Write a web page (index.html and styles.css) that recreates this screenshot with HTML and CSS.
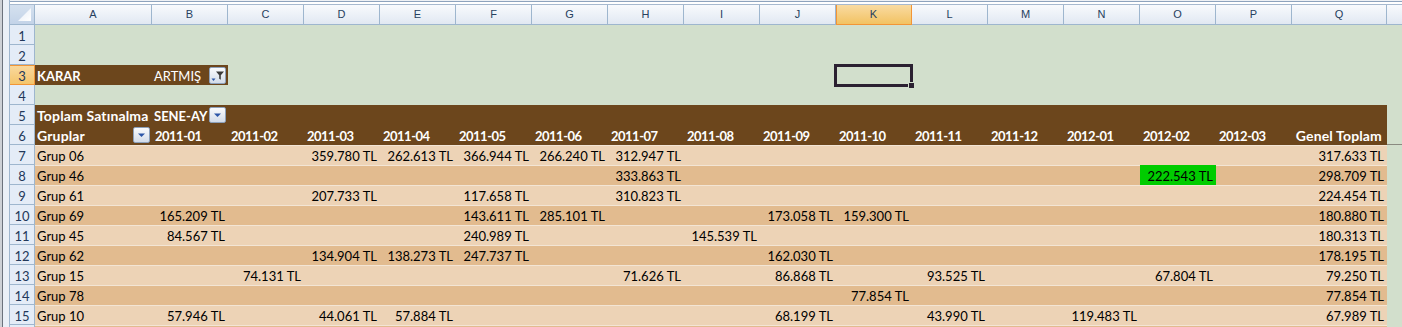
FILE: index.html
```html
<!DOCTYPE html>
<html lang="tr">
<head>
<meta charset="utf-8">
<title>Pivot</title>
<link rel="stylesheet" href="styles.css">
</head>
<body>
<div class="sheet">
  <div class="topframe"><div class="tf-left"></div><div class="tf-lines"></div></div>

  <div class="row colhdr">
    <div class="fr"></div>
    <div class="corner"></div>
    <div class="ch">A</div><div class="ch">B</div><div class="ch">C</div><div class="ch">D</div><div class="ch">E</div>
    <div class="ch">F</div><div class="ch">G</div><div class="ch">H</div><div class="ch">I</div><div class="ch">J</div>
    <div class="ch sel">K</div><div class="ch">L</div><div class="ch">M</div><div class="ch">N</div><div class="ch">O</div>
    <div class="ch">P</div><div class="ch">Q</div><div class="ch last"></div>
  </div>

  <div class="row"><div class="fr"></div><div class="rh">1</div><div class="c span"></div></div>
  <div class="row"><div class="fr"></div><div class="rh">2</div><div class="c span"></div></div>

  <div class="row r3">
    <div class="fr"></div><div class="rh rsel">3</div>
    <div class="c b bold">KARAR</div>
    <div class="c b flexcell"><span>ARTMIŞ</span>
      <span class="btn"><svg width="15" height="15" viewBox="0 0 15 15"><path d="M1.5 10.5h4l-2 2.5z" fill="#2C56A8"/><path d="M6 3.5h8l-3.2 3.8v4.4l-1.6-1v-3.4z" fill="#3a3a3a"/></svg></span>
    </div>
    <div class="c span2"></div>
  </div>

  <div class="row"><div class="fr"></div><div class="rh">4</div><div class="c span"></div></div>

  <div class="row hdr">
    <div class="fr"></div><div class="rh">5</div>
    <div class="c b bold big">Toplam Satınalma</div>
    <div class="c b bold flexcell"><span>SENE-AY</span>
      <span class="btn"><svg width="15" height="14" viewBox="0 0 15 14"><path d="M4 5.5h7l-3.5 3.5z" fill="#2C56A8"/></svg></span>
    </div>
    <div class="c b"></div><div class="c b"></div><div class="c b"></div><div class="c b"></div><div class="c b"></div>
    <div class="c b"></div><div class="c b"></div><div class="c b"></div><div class="c b"></div><div class="c b"></div>
    <div class="c b"></div><div class="c b"></div><div class="c b"></div><div class="c b"></div><div class="c b"></div>
    <div class="c g"></div>
  </div>

  <div class="row hdr">
    <div class="fr"></div><div class="rh">6</div>
    <div class="c b bold flexcell"><span class="big">Gruplar</span>
      <span class="btn"><svg width="15" height="14" viewBox="0 0 15 14"><path d="M4 5.5h7l-3.5 3.5z" fill="#2C56A8"/></svg></span>
    </div>
    <div class="c b bold lab">2011-01</div><div class="c b bold lab">2011-02</div><div class="c b bold lab">2011-03</div>
    <div class="c b bold lab">2011-04</div><div class="c b bold lab">2011-05</div><div class="c b bold lab">2011-06</div>
    <div class="c b bold lab">2011-07</div><div class="c b bold lab">2011-08</div><div class="c b bold lab">2011-09</div>
    <div class="c b bold lab">2011-10</div><div class="c b bold lab">2011-11</div><div class="c b bold lab">2011-12</div>
    <div class="c b bold lab">2012-01</div><div class="c b bold lab">2012-02</div><div class="c b bold lab">2012-03</div>
    <div class="c b bold big num total">Genel Toplam</div>
    <div class="c g tick"></div>
  </div>

  <div class="row data lt">
    <div class="fr"></div><div class="rh">7</div><div class="c">Grup 06</div>
    <div class="c"></div><div class="c"></div><div class="c num">359.780 TL</div><div class="c num">262.613 TL</div><div class="c num">366.944 TL</div>
    <div class="c num">266.240 TL</div><div class="c num">312.947 TL</div><div class="c"></div><div class="c"></div><div class="c"></div>
    <div class="c"></div><div class="c"></div><div class="c"></div><div class="c"></div><div class="c"></div>
    <div class="c num">317.633 TL</div><div class="c g"></div>
  </div>

  <div class="row data dk">
    <div class="fr"></div><div class="rh">8</div><div class="c">Grup 46</div>
    <div class="c"></div><div class="c"></div><div class="c"></div><div class="c"></div><div class="c"></div>
    <div class="c"></div><div class="c num">333.863 TL</div><div class="c"></div><div class="c"></div><div class="c"></div>
    <div class="c"></div><div class="c"></div><div class="c"></div><div class="c num hl">222.543 TL</div><div class="c"></div>
    <div class="c num">298.709 TL</div><div class="c g"></div>
  </div>

  <div class="row data lt">
    <div class="fr"></div><div class="rh">9</div><div class="c">Grup 61</div>
    <div class="c"></div><div class="c"></div><div class="c num">207.733 TL</div><div class="c"></div><div class="c num">117.658 TL</div>
    <div class="c"></div><div class="c num">310.823 TL</div><div class="c"></div><div class="c"></div><div class="c"></div>
    <div class="c"></div><div class="c"></div><div class="c"></div><div class="c"></div><div class="c"></div>
    <div class="c num">224.454 TL</div><div class="c g"></div>
  </div>

  <div class="row data dk">
    <div class="fr"></div><div class="rh">10</div><div class="c">Grup 69</div>
    <div class="c num">165.209 TL</div><div class="c"></div><div class="c"></div><div class="c"></div><div class="c num">143.611 TL</div>
    <div class="c num">285.101 TL</div><div class="c"></div><div class="c"></div><div class="c num">173.058 TL</div><div class="c num">159.300 TL</div>
    <div class="c"></div><div class="c"></div><div class="c"></div><div class="c"></div><div class="c"></div>
    <div class="c num">180.880 TL</div><div class="c g"></div>
  </div>

  <div class="row data lt">
    <div class="fr"></div><div class="rh">11</div><div class="c">Grup 45</div>
    <div class="c num">84.567 TL</div><div class="c"></div><div class="c"></div><div class="c"></div><div class="c num">240.989 TL</div>
    <div class="c"></div><div class="c"></div><div class="c num">145.539 TL</div><div class="c"></div><div class="c"></div>
    <div class="c"></div><div class="c"></div><div class="c"></div><div class="c"></div><div class="c"></div>
    <div class="c num">180.313 TL</div><div class="c g"></div>
  </div>

  <div class="row data dk">
    <div class="fr"></div><div class="rh">12</div><div class="c">Grup 62</div>
    <div class="c"></div><div class="c"></div><div class="c num">134.904 TL</div><div class="c num">138.273 TL</div><div class="c num">247.737 TL</div>
    <div class="c"></div><div class="c"></div><div class="c"></div><div class="c num">162.030 TL</div><div class="c"></div>
    <div class="c"></div><div class="c"></div><div class="c"></div><div class="c"></div><div class="c"></div>
    <div class="c num">178.195 TL</div><div class="c g"></div>
  </div>

  <div class="row data lt">
    <div class="fr"></div><div class="rh">13</div><div class="c">Grup 15</div>
    <div class="c"></div><div class="c num">74.131 TL</div><div class="c"></div><div class="c"></div><div class="c"></div>
    <div class="c"></div><div class="c num">71.626 TL</div><div class="c"></div><div class="c num">86.868 TL</div><div class="c"></div>
    <div class="c num">93.525 TL</div><div class="c"></div><div class="c"></div><div class="c num">67.804 TL</div><div class="c"></div>
    <div class="c num">79.250 TL</div><div class="c g"></div>
  </div>

  <div class="row data dk">
    <div class="fr"></div><div class="rh">14</div><div class="c">Grup 78</div>
    <div class="c"></div><div class="c"></div><div class="c"></div><div class="c"></div><div class="c"></div>
    <div class="c"></div><div class="c"></div><div class="c"></div><div class="c"></div><div class="c num">77.854 TL</div>
    <div class="c"></div><div class="c"></div><div class="c"></div><div class="c"></div><div class="c"></div>
    <div class="c num">77.854 TL</div><div class="c g"></div>
  </div>

  <div class="row data lt">
    <div class="fr"></div><div class="rh">15</div><div class="c">Grup 10</div>
    <div class="c num">57.946 TL</div><div class="c"></div><div class="c num">44.061 TL</div><div class="c num">57.884 TL</div><div class="c"></div>
    <div class="c"></div><div class="c"></div><div class="c"></div><div class="c num">68.199 TL</div><div class="c"></div>
    <div class="c num">43.990 TL</div><div class="c"></div><div class="c num">119.483 TL</div><div class="c"></div><div class="c"></div>
    <div class="c num">67.989 TL</div><div class="c g"></div>
  </div>

  <div class="row data dk partial">
    <div class="fr"></div><div class="rh"></div><div class="c"></div>
    <div class="c"></div><div class="c"></div><div class="c"></div><div class="c"></div><div class="c"></div>
    <div class="c"></div><div class="c"></div><div class="c"></div><div class="c"></div><div class="c"></div>
    <div class="c"></div><div class="c"></div><div class="c"></div><div class="c"></div><div class="c"></div>
    <div class="c"></div><div class="c g"></div>
  </div>

  <div class="selbox"><span class="handle"></span></div>
</div>
</body>
</html>
```

FILE: styles.css
```css
html, body {
  margin: 0;
  padding: 0;
}

body {
  width: 1402px;
  height: 327px;
  overflow: hidden;
  background: #D2DFCC;
  font-family: Lato, "Liberation Sans", sans-serif;
  font-size: 13px;
  color: #000;
}

.sheet {
  position: relative;
  width: 1402px;
  height: 327px;
  overflow: hidden;
}

.topframe {
  display: flex;
  height: 5px;
}

.tf-left {
  width: 10px;
  background: linear-gradient(to right, #CDD1D6 0 2px, #6B727C 2px 3px, #EAF0F7 3px 9px, #9EB6CE 9px 10px);
}

.tf-lines {
  flex: 1;
  background: linear-gradient(to bottom, #EEF1F5 0 1px, #8EA3BD 1px 2px, #FFFFFF 2px 4px, #A7B9CF 4px 5px);
}

.row {
  display: grid;
  grid-template-columns: 10px 25px 117px repeat(15, 76px) 95px 15px;
  height: 20px;
}

.row.partial {
  height: 2px;
  overflow: hidden;
}

.fr {
  background: linear-gradient(to right, #CDD1D6 0 2px, #6B727C 2px 3px, #EAF0F7 3px 9px, #9EB6CE 9px 10px);
}

/* column header row */
.corner {
  position: relative;
  box-sizing: border-box;
  background: linear-gradient(#D5E1EF, #C3D3E8);
  border-right: 1px solid #9EB6CE;
  border-bottom: 1px solid #9EB6CE;
}

.corner::after {
  content: "";
  position: absolute;
  right: 3px;
  bottom: 3px;
  width: 13px;
  height: 13px;
  background: linear-gradient(135deg, #E6EDF6, #FFFFFF);
  clip-path: polygon(100% 0, 100% 100%, 0 100%);
}

.ch {
  box-sizing: border-box;
  background: linear-gradient(#F8FAFD, #E1E8F2);
  border-right: 1px solid #9EB6CE;
  border-bottom: 1px solid #9EB6CE;
  text-align: center;
  font-family: "Liberation Sans", Arial, sans-serif;
  font-size: 11px;
  line-height: 19px;
  color: #27405E;
}

.ch.sel {
  background: linear-gradient(#F9DBA2, #F2C262);
  border-right-color: #F29536;
  border-bottom-color: #F29536;
  box-shadow: inset 1px 0 0 #F29536;
}

.ch.last {
  border-right: none;
}

/* row headers */
.rh {
  box-sizing: border-box;
  height: 20px;
  background: #E4ECF7;
  border-right: 1px solid #9EB6CE;
  border-bottom: 1px solid #9EB6CE;
  text-align: center;
  padding-top: 3px;
  line-height: 16px;
  font-size: 13px;
  color: #22385A;
}

.rh.rsel {
  background: linear-gradient(#F9D9A0, #F4C56C);
  border-bottom-color: #F29536;
  border-right-color: #F29536;
  box-shadow: inset 0 1px 0 #F29536;
}

/* cells */
.c {
  box-sizing: border-box;
  height: 20px;
  padding: 3px 3px 0 2px;
  line-height: 16px;
  white-space: nowrap;
  overflow: visible;
}

.span {
  grid-column: 3 / -1;
}

.span2 {
  grid-column: 5 / -1;
}

.b {
  background: #6C461C;
  color: #FFFFFF;
}

.g {
  background: #D2DFCC;
}

.bold {
  font-weight: 700;
}

.big {
  font-size: 14px;
  letter-spacing: 0.15px;
}

.lab {
  padding-left: 3px;
  letter-spacing: -0.5px;
}

.num {
  text-align: right;
}

.total {
  padding-right: 5px;
}

.tick {
  box-shadow: inset 0 -1px 0 #8A8A80;
}

.flexcell {
  display: flex;
  justify-content: space-between;
  align-items: flex-start;
  padding-right: 2px;
}

.btn {
  display: flex;
  align-items: center;
  justify-content: center;
  box-sizing: border-box;
  width: 17px;
  height: 16px;
  margin-top: -1px;
  border: 1px solid #8DA1BB;
  border-radius: 2px;
  background: linear-gradient(#FAFBFD, #D3DCE9);
  letter-spacing: 0;
}

.r3 .btn {
  height: 17px;
}

/* data rows */
.data > .c {
  border-top: 1px solid #F3E5D5;
  padding-top: 2px;
}

.lt > .c {
  background: #EDD3B6;
}

.dk > .c {
  background: #E2BB8F;
}

.data > .c.g {
  background: #D2DFCC;
  border-top: none;
}

.data > .c.hl {
  background: #00CC00;
  border-top-color: #00CC00;
}

/* active cell selection (overlay) */
.selbox {
  position: absolute;
  left: 834px;
  top: 64px;
  width: 79px;
  height: 23px;
  box-sizing: border-box;
  border: 3px solid #2B2131;
}

.handle {
  position: absolute;
  right: -4px;
  bottom: -4px;
  width: 5px;
  height: 5px;
  background: #2B2131;
  box-shadow: 0 0 0 1px #D2DFCC;
}
```
